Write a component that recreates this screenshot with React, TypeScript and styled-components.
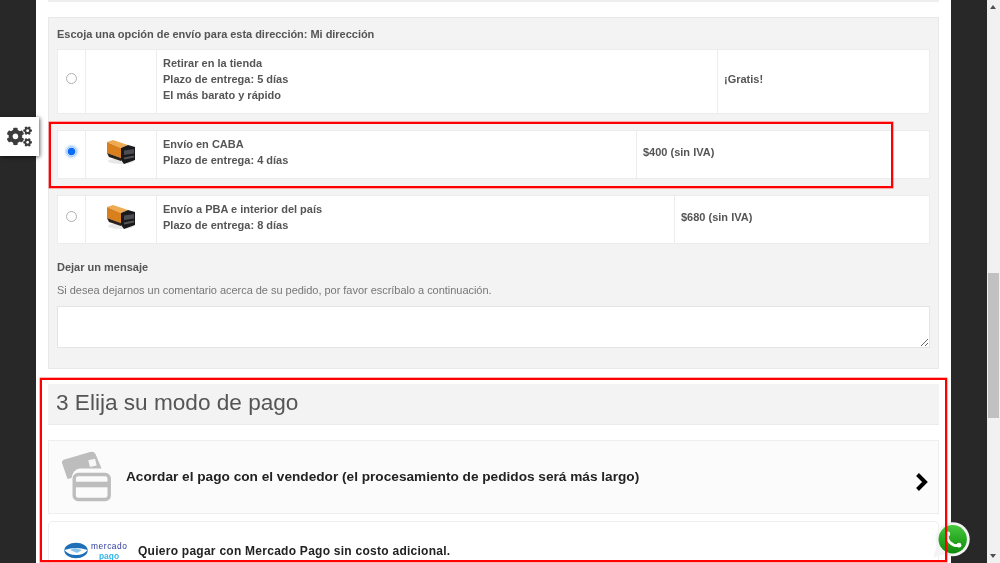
import React from "react";
import styled, { createGlobalStyle } from "styled-components";
import { FaCogs } from "react-icons/fa";

const Global = createGlobalStyle`
  html, body { margin: 0; padding: 0; height: 563px; overflow: hidden; background: #fff; }
  * { box-sizing: border-box; }
  body { font-family: "Liberation Sans", Arial, sans-serif; }
`;

const Page = styled.div`
  position: relative;
  width: 1000px;
  height: 563px;
  overflow: hidden;
  display: grid;
  grid-template-columns: 36px 915px 36px 13px;
  filter: blur(0.35px);
`;
const Side = styled.div`
  background: #282828;
`;
const Content = styled.main`
  background: #fff;
  padding: 0 12px;
  height: 563px;
  overflow: hidden;
`;
const TopEdge = styled.div`
  height: 2px;
  border-bottom: 2px solid #eee;
  margin-bottom: 15px;
`;
const Panel = styled.section`
  height: 352px;
  background: #f3f3f3;
  border: 1px solid #e8e8e8;
  padding: 9px 8px 0;
`;
const PanelTitle = styled.div`
  font-size: 11px;
  font-weight: 700;
  line-height: 15px;
  color: #555;
  height: 22px;
  letter-spacing: -0.03px;
`;
const Row = styled.div<{ $h: number; $price: number; $mb: number }>`
  display: grid;
  grid-template-columns: 28px 71px 1fr ${(p) => p.$price}px;
  height: ${(p) => p.$h}px;
  margin-bottom: ${(p) => p.$mb}px;
  background: #fff;
  border: 1px solid #ececec;
`;
const Cell = styled.div`
  display: flex;
  align-items: center;
  justify-content: center;
  border-right: 1px solid #ececec;
  padding-bottom: 6px;
`;
const Desc = styled.div`
  display: flex;
  flex-direction: column;
  justify-content: center;
  border-right: 1px solid #ececec;
  padding: 0 0 3px 6px;
  font-size: 11px;
  font-weight: 700;
  line-height: 15.7px;
  color: #555;
`;
const PriceCell = styled.div`
  display: flex;
  align-items: center;
  padding: 0 0 5px 6px;
  font-size: 11px;
  font-weight: 700;
  color: #555;
`;
const Radio = styled.input`
  appearance: none;
  width: 11px;
  height: 11px;
  margin: 0;
  border-radius: 50%;
  border: 1px solid #b0b0b0;
  background: #fff;
  &:checked {
    border: 1px solid #9cc4fb;
    background: radial-gradient(circle, #0a6cf5 0 3.4px, #d6e6fd 4.2px);
    box-shadow: 0 0 2px 1px rgba(90, 160, 255, 0.35);
  }
`;
const Label = styled.div`
  font-size: 11px;
  font-weight: 700;
  color: #555;
  line-height: 15px;
  margin-top: 16px;
`;
const Help = styled.p`
  margin: 8px 0 8px;
  font-size: 11px;
  line-height: 15px;
  color: #777;
  letter-spacing: -0.03px;
`;
const Message = styled.textarea`
  display: block;
  width: 100%;
  height: 42px;
  margin: 0;
  background: #fff;
  border: 1px solid #e4e4e4;
  resize: vertical;
  outline: 0;
`;
const Heading = styled.h2`
  margin: 15px 0 0;
  height: 41px;
  padding: 0 8px 2px;
  display: flex;
  align-items: center;
  background: #f3f3f3;
  border-bottom: 1px solid #ebebeb;
  font-size: 22.6px;
  font-weight: 400;
  color: #555;
`;
const PayOption = styled.div`
  margin-top: 15px;
  height: 74px;
  display: flex;
  align-items: center;
  background: #fbfbfb;
  border: 1px solid #eee;
  padding: 0 9px 0 12px;
`;
const PayText = styled.span`
  margin-left: 13px;
  margin-top: -2px;
  flex: 1;
  font-size: 13.65px;
  font-weight: 700;
  color: #222;
`;
const MercadoOption = styled.div`
  margin-top: 7px;
  height: 60px;
  display: flex;
  align-items: flex-start;
  background: #fff;
  border: 1px solid #eee;
  border-radius: 4px;
  padding: 20px 0 0 15px;
`;
const MercadoText = styled.span`
  margin-left: 11px;
  font-size: 12px;
  line-height: 17px;
  margin-top: 1px;
  font-weight: 700;
  color: #222;
  letter-spacing: 0.26px;
`;
const ChevronIcon = styled.svg`
  width: 15px;
  height: 20px;
  margin-top: 10px;
`;
const Scrollbar = styled.div`
  position: relative;
  background: #f1f1f1;
`;
const Thumb = styled.div`
  position: absolute;
  top: 273px;
  left: 1px;
  right: 1px;
  height: 145px;
  background: #c1c1c1;
`;
const ArrowUp = styled.div`
  position: absolute;
  top: 5px;
  left: 3px;
  border: 3.5px solid transparent;
  border-top: 0;
  border-bottom: 4px solid #505050;
`;
const ArrowDown = styled.div`
  position: absolute;
  bottom: 5px;
  left: 3px;
  border: 3.5px solid transparent;
  border-bottom: 0;
  border-top: 4px solid #505050;
`;
const SettingsTab = styled.div`
  position: absolute;
  left: 0;
  top: 117px;
  width: 39px;
  height: 39px;
  background: #fff;
  box-shadow: 1px 1px 4px rgba(0, 0, 0, 0.6);
  display: flex;
  align-items: center;
  padding-left: 7px;
  color: #3c3c3c;
`;
const Gears = styled(FaCogs)`
  width: 25px;
  height: 25px;
`;
const WhatsBadge = styled.svg`
  position: absolute;
  left: 932px;
  top: 521px;
  width: 40px;
  height: 40px;
`;
const RedFrame = styled.div<{ $l: number; $t: number; $w: number; $h: number }>`
  position: absolute;
  left: ${(p) => p.$l}px;
  top: ${(p) => p.$t}px;
  width: ${(p) => p.$w}px;
  height: ${(p) => p.$h}px;
  border: 2px solid #f00;
  box-shadow: 0 0 0 0.5px rgba(255, 0, 0, 0.6);
  pointer-events: none;
`;

const Truck = () => (
  <svg width="30" height="26" viewBox="0 0 30 26" aria-hidden="true">
    <ellipse cx="15" cy="22" rx="13" ry="3" fill="#ccc" opacity=".45" />
    <polygon points="1,3 7,1 22,6 15,9" fill="#eeaa50" />
    <polygon points="1,3 15,9 15,19 1,14" fill="#d9801c" />
    <polygon points="1,14 15,19 15,22 3,18" fill="#2b2118" />
    <polygon points="15,9 22,6 29,8 29,21 18,25 15,21" fill="#1a1a1c" />
    <polygon points="18,11.500 28,10 28,14.500 18,16" fill="#4a4d52" />
    <polygon points="18,18.500 28,16.500 28,18.500 18,20.500" fill="#555" />
  </svg>
);

const Cards = () => (
  <svg width="52" height="52" viewBox="0 0 52 52" aria-hidden="true">
    <path d="M1 12 Q.500 9.500 3.500 8.500 L29 1 Q33 0 34.500 3 L40.500 17.500 H19 Q12 18 10.500 27 L6.500 28 Z" fill="#bdbdbd" />
    <rect x="28" y="8.500" width="7" height="7" fill="#f7f7f7" transform="rotate(-14 31 12)" />
    <rect x="13.200" y="23.500" width="35" height="25" rx="4" fill="none" stroke="#bdbdbd" strokeWidth="3.400" />
    <rect x="13.200" y="30.700" width="35" height="5.600" fill="#bdbdbd" />
  </svg>
);

const Chevron = () => (
  <ChevronIcon viewBox="0 0 15 20" aria-hidden="true">
    <polyline points="3.500,2.500 11,10 3.500,17.500" fill="none" stroke="#000" strokeWidth="4" />
  </ChevronIcon>
);

const MercadoLogo = () => (
  <svg width="63" height="19" viewBox="0 0 63 19" aria-hidden="true">
    <ellipse cx="12" cy="8.500" rx="11.700" ry="7.800" fill="#1f6fb8" />
    <path d="M.500 8 Q12 4 23.500 8 Q20 13 12 13 Q4 13 .500 8Z" fill="#fff" />
    <path d="M6 8 L11 6 L18 8 L13 11Z" fill="#8ec4ea" />
    <text x="27" y="7" fontFamily="Liberation Sans, sans-serif" fontSize="8.400" textLength="36" lengthAdjust="spacing" fill="#2d3a9e">mercado</text>
    <text x="35" y="16.500" fontFamily="Liberation Sans, sans-serif" fontSize="8.400" fontWeight="700" fill="#35b5ea">pago</text>
  </svg>
);

const options = [
  { h: 65, price: 211, mb: 16, truck: false, lines: ["Retirar en la tienda", "Plazo de entrega: 5 días", "El más barato y rápido"], cost: "¡Gratis!", on: false },
  { h: 49, price: 292, mb: 16, truck: true, lines: ["Envío en CABA", "Plazo de entrega: 4 días"], cost: "$400 (sin IVA)", on: true },
  { h: 49, price: 254, mb: 0, truck: true, lines: ["Envío a PBA e interior del país", "Plazo de entrega: 8 días"], cost: "$680 (sin IVA)", on: false },
];

export default function App() {
  return (
    <>
      <Global />
      <Page>
        <Side />
        <Content>
          <TopEdge />
          <Panel>
            <PanelTitle>Escoja una opción de envío para esta dirección: Mi dirección</PanelTitle>
            {options.map((o) => (
              <Row key={o.cost} $h={o.h} $price={o.price} $mb={o.mb}>
                <Cell>
                  <Radio type="radio" name="envio" defaultChecked={o.on} />
                </Cell>
                <Cell>{o.truck && <Truck />}</Cell>
                <Desc>
                  {o.lines.map((l) => (
                    <div key={l}>{l}</div>
                  ))}
                </Desc>
                <PriceCell>{o.cost}</PriceCell>
              </Row>
            ))}
            <Label>Dejar un mensaje</Label>
            <Help>Si desea dejarnos un comentario acerca de su pedido, por favor escríbalo a continuación.</Help>
            <Message />
          </Panel>
          <Heading>3 Elija su modo de pago</Heading>
          <PayOption>
            <Cards />
            <PayText>Acordar el pago con el vendedor (el procesamiento de pedidos será más largo)</PayText>
            <Chevron />
          </PayOption>
          <MercadoOption>
            <MercadoLogo />
            <MercadoText>Quiero pagar con Mercado Pago sin costo adicional.</MercadoText>
          </MercadoOption>
        </Content>
        <Side />
        <Scrollbar>
          <ArrowUp />
          <Thumb />
          <ArrowDown />
        </Scrollbar>
        <SettingsTab>
          <Gears />
        </SettingsTab>
        <WhatsBadge viewBox="0 0 40 40" aria-hidden="true">
          <defs>
            <linearGradient id="wa" x1="0" y1="0" x2="0" y2="1">
              <stop offset="0" stopColor="#46c83c" />
              <stop offset="1" stopColor="#0d8a0a" />
            </linearGradient>
          </defs>
          <circle cx="20.700" cy="18.300" r="17" fill="#f4f4f4" />
          <polygon points="1,36.500 5,24 14,33" fill="#f4f4f4" />
          <circle cx="20.700" cy="18.300" r="14.200" fill="url(#wa)" />
          <path d="M15.500 12.500 Q14.500 18 18 21.500 Q22 25.500 27.500 24.500" fill="none" stroke="#fff" strokeWidth="2.800" />
          <circle cx="15.800" cy="13" r="2.400" fill="#fff" />
          <circle cx="27" cy="24.200" r="2.400" fill="#fff" />
        </WhatsBadge>
        <RedFrame $l={49} $t={122} $w={844} $h={66} />
        <RedFrame $l={40} $t={378} $w={907} $h={184} />
      </Page>
    </>
  );
}
